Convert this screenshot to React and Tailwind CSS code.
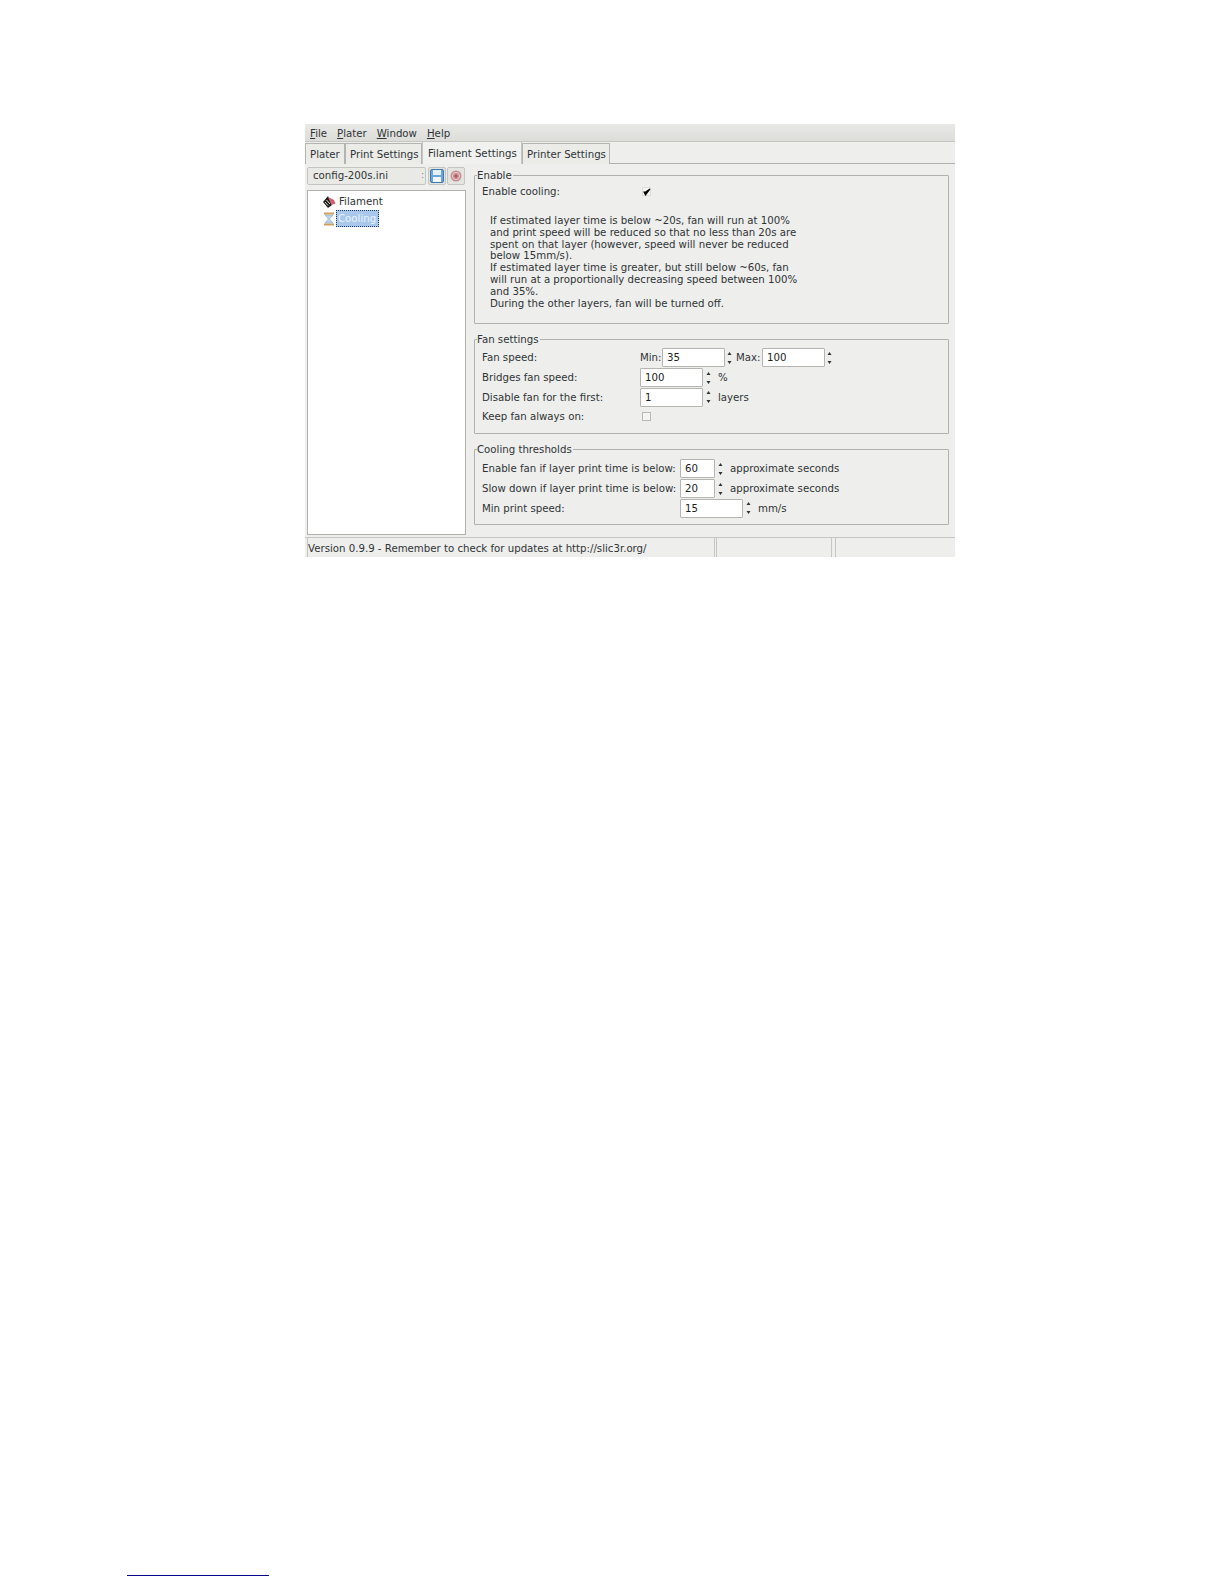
function Spin({ className = "" }) {
  return (
    <svg width="5" height="14" viewBox="0 0 5 14" className={`shrink-0 ${className}`}>
      <path d="M2.5 1 L4.5 4 H0.5 Z M2.5 13 L0.5 10 H4.5 Z" fill="#2e3436" />
    </svg>
  );
}

function Field({ value, w = "w-[63px]" }) {
  return (
    <div className={`${w} h-[19px] bg-white border border-[#b4b4b0] rounded-[1px] pl-[4px] leading-[18px] shrink-0 text-[#1c1f1f]`}>
      {value}
    </div>
  );
}

function Tab({ children, active, className = "" }) {
  return (
    <div
      className={
        active
          ? `h-[22px] -mb-px z-10 bg-[#f1f1ef] border-x border-[#c4c4c0] pl-[5px] pt-[2px] flex items-center whitespace-nowrap ${className}`
          : `h-[21px] mt-[1px] bg-[#ebebe8] border border-b-0 border-[#b4b4b0] pl-[4px] pt-[2px] flex items-center whitespace-nowrap ${className}`
      }
    >
      {children}
    </div>
  );
}

function Group({ title, className = "", children }) {
  return (
    <fieldset className={`border border-[#b0b0ac] rounded-[1px] ${className}`}>
      <legend className="ml-[2px] pr-[1px] h-[13px] leading-[13px]">{title}</legend>
      {children}
    </fieldset>
  );
}

const help = [
  "If estimated layer time is below ~20s, fan will run at 100%",
  "and print speed will be reduced so that no less than 20s are",
  "spent on that layer (however, speed will never be reduced",
  "below 15mm/s).",
  "If estimated layer time is greater, but still below ~60s, fan",
  "will run at a proportionally decreasing speed between 100%",
  "and 35%.",
  "During the other layers, fan will be turned off.",
];

export default function App() {
  return (
    <div className="w-[1224px] h-[1584px] bg-white overflow-hidden pt-[124px] pl-[127px] text-[10.2px] text-[#2e3436] font-['DejaVu_Sans',sans-serif]">
      <div className="ml-[178px] w-[650px] h-[433px] bg-[#eeeeec] flex flex-col">
        <div className="h-[18px] bg-gradient-to-b from-[#e9e9e7] to-[#dcdcd9] border-b border-[#c6c6c2] flex items-center pl-[5px] pt-[2px] gap-[10px] shrink-0">
          <span><u>F</u>ile</span>
          <span><u>P</u>later</span>
          <span><u>W</u>indow</span>
          <span><u>H</u>elp</span>
        </div>
        <div className="h-[22px] flex items-start border-b border-[#b0b0ac] shrink-0">
          <Tab className="w-[40px]">Plater</Tab>
          <Tab className="w-[77px]">Print Settings</Tab>
          <Tab active className="w-[100px]">Filament Settings</Tab>
          <Tab className="w-[88px]">Printer Settings</Tab>
        </div>
        <div className="flex-1 flex min-h-0">
          <div className="w-[169px] shrink-0 pl-[2px] pt-[3px] flex flex-col">
            <div className="flex items-center gap-[2px] h-[18px]">
              <div className="w-[119px] h-[18px] bg-[#e9e9e6] border border-[#c4c4c0] rounded-[2px] pl-[5px] leading-[16px] flex justify-between pr-[1px]">
                <span>config-200s.ini</span>
                <span className="text-[#777] text-[8px]">:</span>
              </div>
              <div className="w-[18px] h-[18px] bg-[#e4e4e1] border border-[#c4c4c0] rounded-[2px] flex items-center justify-center">
                <svg width="14" height="14" viewBox="0 0 14 14">
                  <rect x="0.5" y="0.5" width="13" height="13" rx="1.5" fill="#6aa7d8" stroke="#3f78ad" />
                  <rect x="3" y="1" width="8" height="5" fill="#e6eff7" />
                  <rect x="3" y="8" width="8" height="5" fill="#f2f6fa" />
                </svg>
              </div>
              <div className="w-[18px] h-[18px] ml-[-1px] bg-[#e4e4e1] border border-[#c4c4c0] rounded-[2px] flex items-center justify-center">
                <svg width="12" height="12" viewBox="0 0 12 12">
                  <circle cx="6" cy="6" r="5.5" fill="#c78d92" />
                  <circle cx="6" cy="6" r="3.6" fill="none" stroke="#eed6d8" strokeWidth="0.9" />
                  <circle cx="6" cy="6" r="1.6" fill="#b25560" />
                </svg>
              </div>
            </div>
            <div className="mt-[5px] w-[159px] h-[345px] bg-white border border-[#b0b0ac] pt-[3px] pl-[14px]">
              <div className="h-[16px] flex items-center gap-[3px]">
                <svg width="14" height="14" viewBox="0 0 14 14" className="shrink-0">
                  <path d="M6 1 L1 7 L6 13 L10 10 Z" fill="#1f1f1f" />
                  <path d="M6 2 L12 5 L13.5 8.5 L9.5 10 Z" fill="#d0606f" />
                  <path d="M3 7 L6 10.5 M4.5 5 L8 9" stroke="#eeeeee" strokeWidth="0.9" />
                </svg>
                <span>Filament</span>
              </div>
              <div className="h-[17px] flex items-center gap-[2px] pl-[2px]">
                <svg width="10" height="14" viewBox="0 0 10 14" className="shrink-0">
                  <rect x="0" y="0.5" width="10" height="2" fill="#d2a05c" />
                  <rect x="0" y="11.5" width="10" height="2" fill="#d2a05c" />
                  <path d="M1 3 H9 L5.6 7 L9 11 H1 L4.4 7 Z" fill="#b8d4ee" stroke="#8a9db0" strokeWidth="0.5" />
                </svg>
                <span className="h-[17px] px-[1px] w-[43px] bg-[#a9c8ec] border border-dotted border-[#1c3a66] text-[#eaf2fb] leading-[15px] whitespace-nowrap overflow-hidden">
                  Cooling
                </span>
              </div>
            </div>
          </div>
          <div className="w-[475px] shrink-0 flex flex-col">
            <Group title="Enable" className="h-[155px] mt-[5px]">
              <div className="pl-[7px] h-[15px] flex items-center mt-[2px]">
                <span className="w-[160px]">Enable cooling:</span>
                <span className="w-[9px] h-[9px] bg-[#f7f7f5] border border-[#dcdcd8] flex items-center justify-center">
                  <svg width="8" height="8" viewBox="0 0 8 8" className="shrink-0">
                    <path d="M1 4 L2.5 7 L7 1 L3 3.8 Z" fill="#000" stroke="#000" strokeWidth="1.1" />
                  </svg>
                </span>
              </div>
              <div className="mt-[16px] pl-[15px] leading-[11.8px] whitespace-nowrap">
                {help.map((t) => (
                  <div key={t}>{t}</div>
                ))}
              </div>
            </Group>
            <Group title="Fan settings" className="h-[101px] mt-[9px]">
              <div className="pl-[7px] pt-[2px] flex flex-col">
                <div className="h-[19.7px] flex items-center">
                  <span className="w-[158px] shrink-0">Fan speed:</span>
                  <span className="w-[22px] shrink-0">Min:</span>
                  <Field value="35" />
                  <Spin className="ml-[2px]" />
                  <span className="ml-[4px] w-[26px] shrink-0">Max:</span>
                  <Field value="100" />
                  <Spin className="ml-[2px]" />
                </div>
                <div className="h-[19.7px] flex items-center">
                  <span className="w-[158px] shrink-0">Bridges fan speed:</span>
                  <Field value="100" />
                  <Spin className="ml-[3px]" />
                  <span className="ml-[7px]">%</span>
                </div>
                <div className="h-[19.7px] flex items-center">
                  <span className="w-[158px] shrink-0">Disable fan for the first:</span>
                  <Field value="1" />
                  <Spin className="ml-[3px]" />
                  <span className="ml-[7px]">layers</span>
                </div>
                <div className="h-[19.7px] flex items-center">
                  <span className="w-[160px] shrink-0">Keep fan always on:</span>
                  <span className="w-[9px] h-[9px] bg-[#f4f4f2] border border-[#b8b8b4]" />
                </div>
              </div>
            </Group>
            <Group title="Cooling thresholds" className="h-[82px] mt-[9px]">
              <div className="pl-[7px] pt-[3px] flex flex-col">
                <div className="h-[19.7px] flex items-center">
                  <span className="w-[198px] shrink-0 whitespace-nowrap">Enable fan if layer print time is below:</span>
                  <Field value="60" w="w-[35px]" />
                  <Spin className="ml-[3px]" />
                  <span className="ml-[7px]">approximate seconds</span>
                </div>
                <div className="h-[19.7px] flex items-center">
                  <span className="w-[198px] shrink-0 whitespace-nowrap">Slow down if layer print time is below:</span>
                  <Field value="20" w="w-[35px]" />
                  <Spin className="ml-[3px]" />
                  <span className="ml-[7px]">approximate seconds</span>
                </div>
                <div className="h-[19.7px] flex items-center">
                  <span className="w-[198px] shrink-0">Min print speed:</span>
                  <Field value="15" />
                  <Spin className="ml-[3px]" />
                  <span className="ml-[7px]">mm/s</span>
                </div>
              </div>
            </Group>
          </div>
        </div>
        <div className="h-[20px] flex shrink-0 border-t border-[#c6c6c2] pl-[2px]">
          <div className="w-[408px] border-x border-[#c6c6c2] pt-[1px] leading-[19px] whitespace-nowrap">
            Version 0.9.9 - Remember to check for updates at http://slic3r.org/
          </div>
          <div className="ml-[1px] w-[116px] border-x border-[#c6c6c2]" />
          <div className="ml-[3px] flex-1 border-l border-[#c6c6c2]" />
        </div>
      </div>
      <div className="mt-[1018px] w-[142px] h-px bg-[#0a0a8c]" />
    </div>
  );
}
